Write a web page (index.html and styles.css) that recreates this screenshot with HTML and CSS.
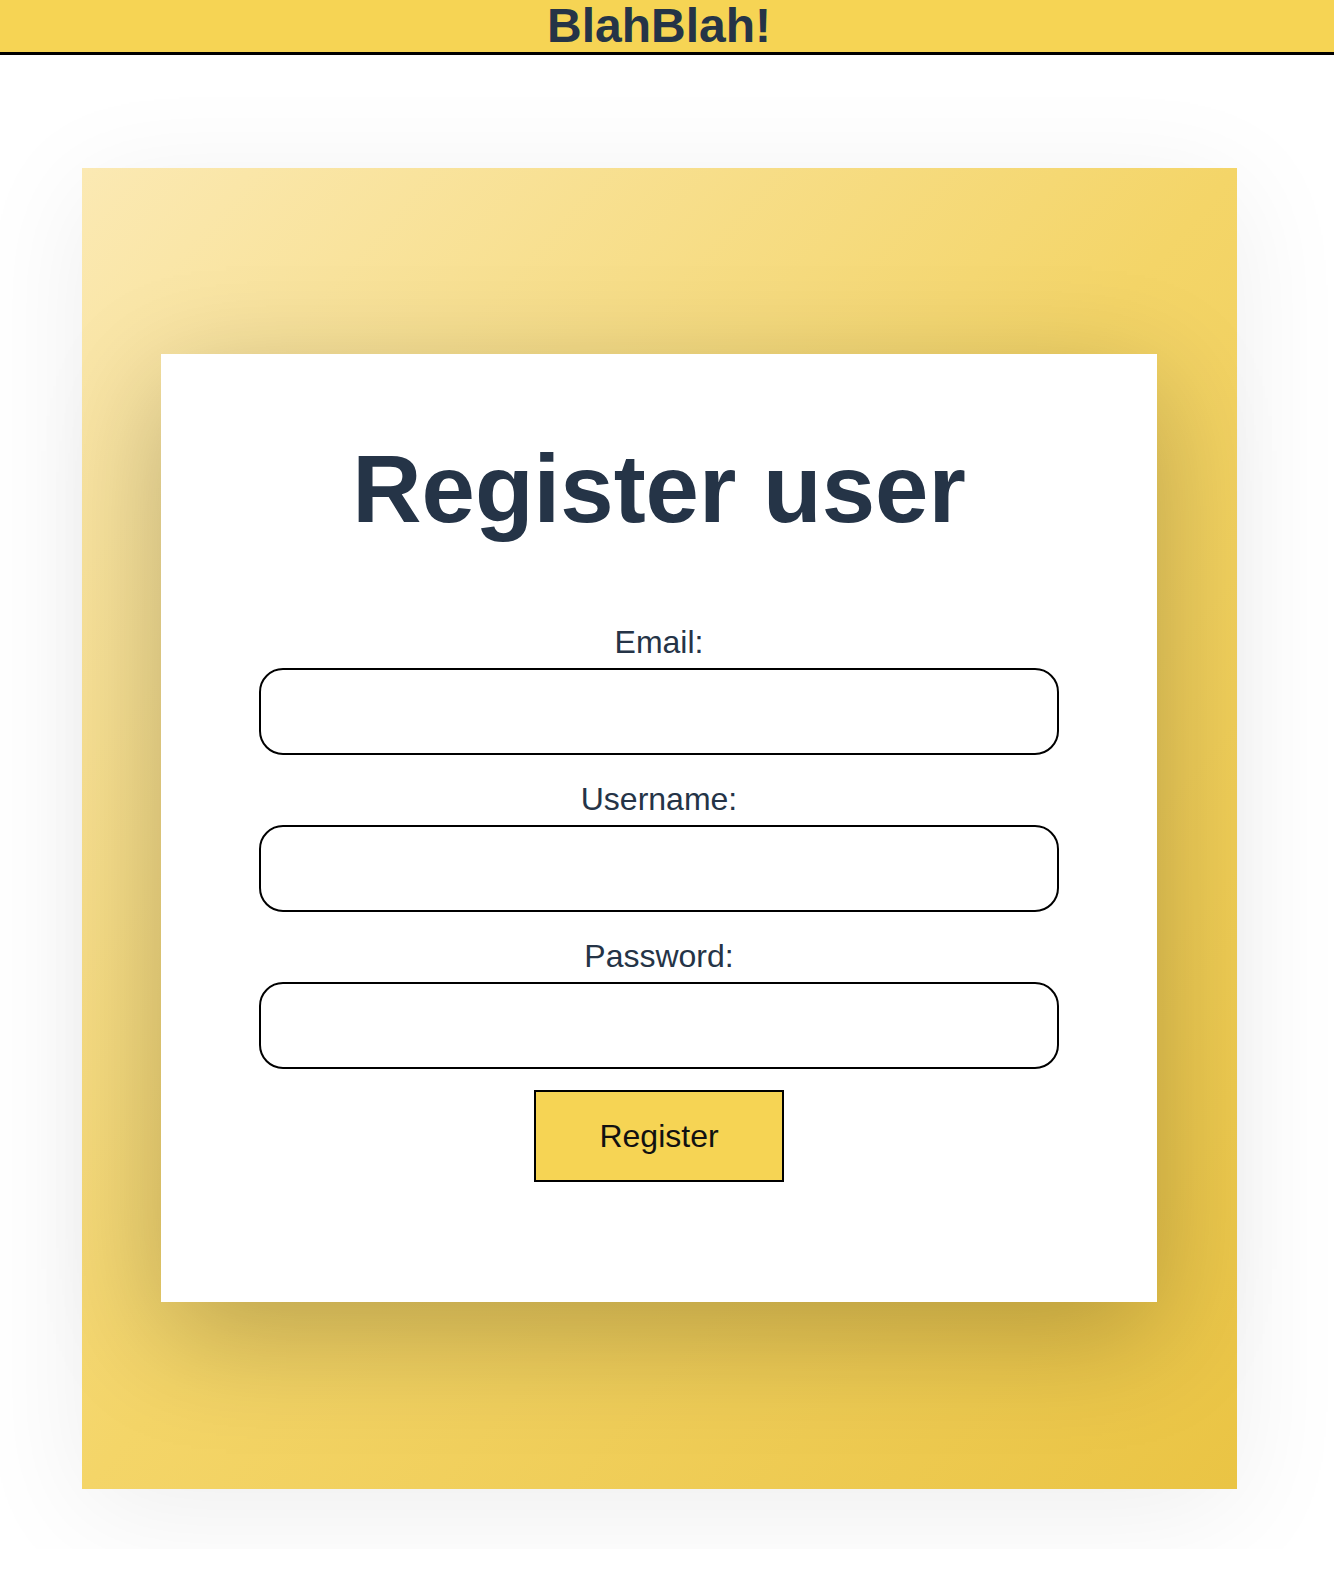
FILE: index.html
```html
<!DOCTYPE html>
<html lang="en">
<head>
  <meta charset="UTF-8">
  <meta name="viewport" content="width=device-width, initial-scale=1.0">
  <title>Register</title>
  <link rel="stylesheet" href="styles.css">
</head>
<body>
  <header class="top-bar">
    <h1 class="logo">BlahBlah!</h1>
  </header>

  <div class="register-wrap">
    <div class="register-card">
      <h2 class="register-title">Register user</h2>
      <form class="register-form" onsubmit="return false;">
        <label for="email">Email:</label>
        <input id="email" type="email">
        <label for="username">Username:</label>
        <input id="username" type="text">
        <label for="password">Password:</label>
        <input id="password" type="password">
        <button type="submit" class="register-btn">Register</button>
      </form>
    </div>
  </div>
</body>
</html>
```

FILE: styles.css
```css
body {
  font-family: 'Liberation Sans', Arial, sans-serif;
  margin: 0;
  padding: 0;
  background-color: #fff;
  color: #253447;
}

.top-bar {
  background-color: #f6d454;
  border-bottom: 3px solid #000;
  height: 52px;
  text-align: center;
  padding-right: 16px;
}

.logo {
  margin: 0;
  font-size: 48px;
  font-weight: 700;
  line-height: 52px;
}

.register-wrap {
  width: 1155px;
  margin: 113px 0 60px 82px;
  padding: 186px 80px 187px 79px;
  box-sizing: border-box;
  background: linear-gradient(to bottom right, #fbe9b3, #f4d568 50%, #eac444);
  box-shadow: 0 20px 110px rgba(0, 0, 0, 0.07);
}

.register-card {
  background-color: #fff;
  padding: 80px 0 120px;
  box-shadow: 0 32px 110px rgba(0, 0, 0, 0.24);
}

.register-title {
  margin: 0 0 80px;
  font-size: 96px;
  font-weight: 700;
  text-align: center;
  line-height: 110px;
}

.register-form {
  display: flex;
  flex-direction: column;
  align-items: center;
}

.register-form label {
  font-size: 32px;
  line-height: 37px;
  margin-bottom: 7px;
}

.register-form input {
  width: 800px;
  height: 87px;
  box-sizing: border-box;
  border: 2px solid #000;
  border-radius: 24px;
  margin-bottom: 26px;
  font-size: 28px;
  padding: 0 20px;
  background: #fff;
}

.register-form input:last-of-type {
  margin-bottom: 21px;
}

.register-btn {
  width: 250px;
  height: 92px;
  background-color: #f6d454;
  border: 2px solid #000;
  border-radius: 0;
  font-family: inherit;
  font-size: 32px;
  color: #111;
  cursor: pointer;
}
```
